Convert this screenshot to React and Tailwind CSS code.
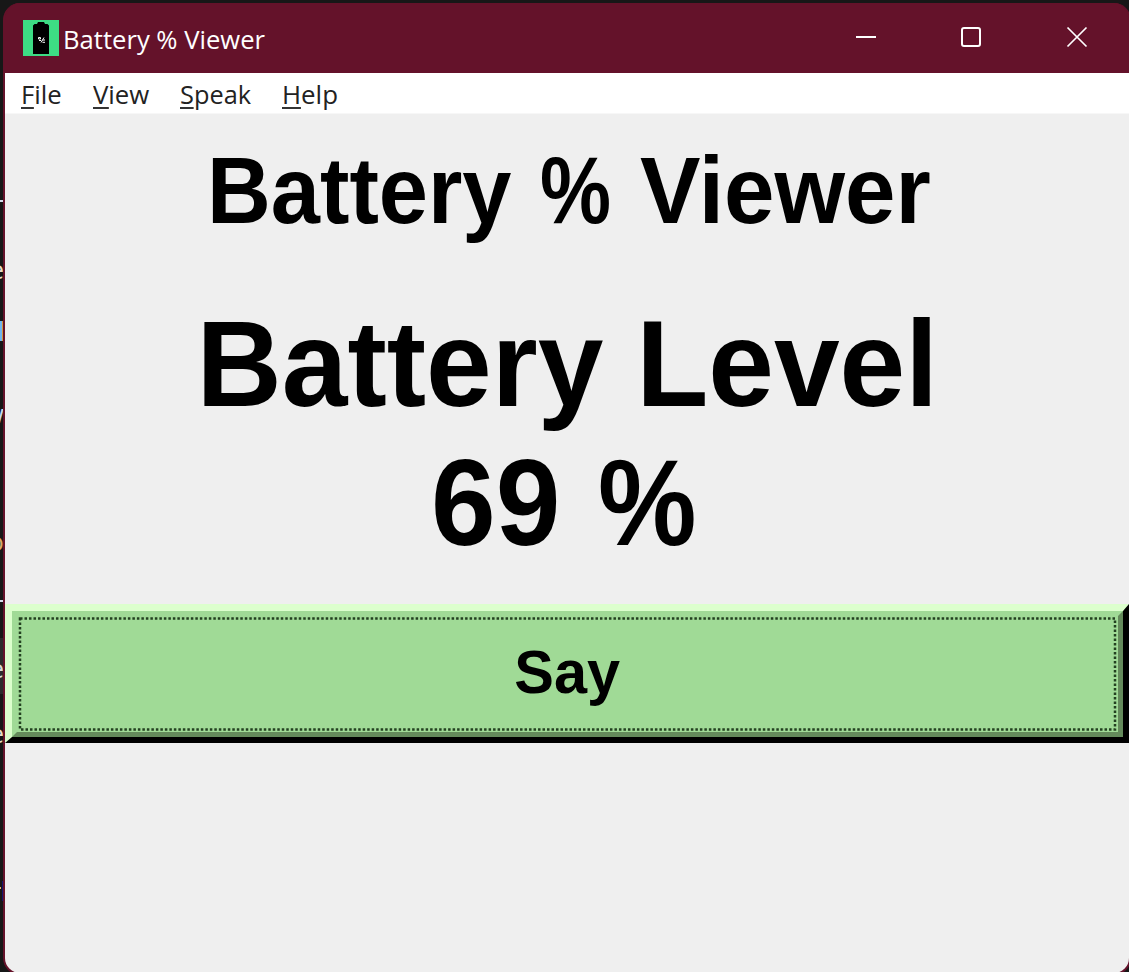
import React from "react";

const fragments = [
  { t: "T", y: 193, c: "text-[#d5dcec]" },
  { t: "e", y: 254, c: "text-[#e8dcc8]" },
  { t: "w", y: 398, c: "text-[#c9d8ee]" },
  { t: "o", y: 526, c: "text-[#dca868]" },
  { t: "T", y: 593, c: "text-[#d5dcec]" },
  { t: "e", y: 653, c: "text-[#d8d8d8]" },
  { t: "e", y: 718, c: "text-[#e8dcc8]" },
];

function MenuItem({ k, rest, box, sx }) {
  return (
    <div className={`h-full shrink-0 ${box}`}>
      <span className={`inline-block origin-left whitespace-nowrap ${sx}`}>
        <span className="relative inline-block">
          {k}
          <span className="absolute inset-x-0 bottom-[6px] h-[2px] bg-[#333]" />
        </span>
        {rest}
      </span>
    </div>
  );
}

function TitleBar() {
  return (
    <header className="flex h-[70px] shrink-0 items-start bg-[#64122a] text-white">
      <svg className="ml-[18px] mt-[17px] size-9 shrink-0" viewBox="0 0 36 36">
        <rect width="36" height="36" fill="#3ddc84" />
        <path d="M15 2h6l1 2h2.5l1.5 1.5V34H10V5.5L11.500 4H14z" fill="#000" />
        <path d="M15.500 17.500h2v1.500h-2zM16 20.500h2M21 17.500l-3 5M19.500 20h2.500M19.500 22.300h2.500" stroke="#fff" strokeWidth="1" fill="none" />
      </svg>
      <h1 className="ml-[4px] mt-[16px] w-[210px] font-['Open_Sans',sans-serif] text-[26px] leading-[40px] whitespace-nowrap">
        <span className="inline-block origin-left scale-x-[0.985]">Battery % Viewer</span>
      </h1>
      <svg className="ml-auto mr-[40px] mt-[23px] h-[22px] w-[233px] shrink-0" viewBox="0 0 233 22" fill="none" stroke="#fff" strokeWidth="2">
        <path d="M0 11h20" />
        <rect x="106" y="2" width="18" height="18" rx="2" />
        <path d="M211.500 1.500l19 19m0-19l-19 19" strokeWidth="1.7" />
      </svg>
    </header>
  );
}

export default function App() {
  return (
    <div className="flex h-[972px] w-[1129px] overflow-hidden bg-[#171717] font-['Liberation_Sans',Arial,sans-serif]">
      <div className="relative w-[3px] shrink-0 overflow-hidden font-['Open_Sans',sans-serif] text-[26px] leading-[30px]">
        <span className="absolute left-0 top-[638px] h-[56px] w-[3px] bg-[#2b2b2b]" />
        {fragments.map((f) => (
          <span key={f.y} className={`absolute -right-px ${f.c}`} style={{ top: f.y }}>{f.t}</span>
        ))}
        <span className="absolute left-0 top-[321px] h-5 w-[3px] border-r border-[#d8923c] bg-[#70b5ee]" />
        <span className="absolute left-0 top-[887px] h-[2px] w-px bg-[#e0b080]" />
        <span className="absolute left-[2px] top-[881px] h-5 w-px bg-[#14146e]" />
      </div>
      <div className="mt-[3px] flex h-[972px] w-[1128px] shrink-0 flex-col overflow-hidden rounded-[17px] border-x-2 border-b-2 border-[#64122a] bg-[#64122a]">
        <TitleBar />
        <nav className="flex h-[41px] shrink-0 border-b border-[#f7f7f7] bg-white pl-[16px] font-['Open_Sans',sans-serif] text-[26px] leading-[42px] text-[#222]">
          <MenuItem k="F" rest="ile" box="w-[72px]" sx="scale-x-[0.99]" />
          <MenuItem k="V" rest="iew" box="w-[87px]" sx="scale-x-[0.99]" />
          <MenuItem k="S" rest="peak" box="w-[102px]" sx="scale-x-[0.975]" />
          <MenuItem k="H" rest="elp" box="w-[72px]" sx="scale-x-[0.995]" />
        </nav>
        <main className="flex flex-1 flex-col bg-[#efefef] font-bold text-black">
          <h2 className="mt-[23px] flex h-[107px] pl-[202px] text-[94px] leading-[108px] whitespace-nowrap">
            <span className="w-[333px] shrink-0"><span className="inline-block origin-left scale-x-[0.94]">Battery</span></span>{" "}
            <span className="w-[100px] shrink-0"><span className="inline-block origin-left scale-x-[0.85]">%</span></span>{" "}
            <span className="inline-block origin-left scale-x-[0.965]">Viewer</span>
          </h2>
          <div className="mt-[50px] text-[123px] leading-[139px] whitespace-nowrap">
            <div className="text-center">
              <span className="inline-block scale-x-[0.96]">Battery Level</span>
            </div>
            <div className="flex pl-[426px]">
              <span className="w-[167px] shrink-0"><span className="inline-block origin-left scale-x-[0.945]">69</span></span>{" "}
              <span className="inline-block origin-left scale-x-[0.9]">%</span>
            </div>
          </div>
          <button className="mt-[32px] h-[139px] w-full border-t-[7px] border-r-[6px] border-b-[6px] border-l-[7px] border-t-[#dcffcd] border-r-black border-b-black border-l-[#dcffcd]">
            <span className="relative flex h-full items-center justify-center border-[5px] border-t-[#a0da96] border-r-[#648a5b] border-b-[#648a5b] border-l-[#a0da96] bg-[#a0da96] text-[61px]">
              <span className="mb-[2px] inline-block scale-x-[0.975]">Say</span>
              <svg className="absolute inset-0 size-full" viewBox="0 0 1102 116" fill="none">
                <rect x="3" y="2.500" width="1096" height="111" stroke="#234020" strokeWidth="2.500" strokeDasharray="2.500 2" />
              </svg>
            </span>
          </button>
        </main>
      </div>
    </div>
  );
}
